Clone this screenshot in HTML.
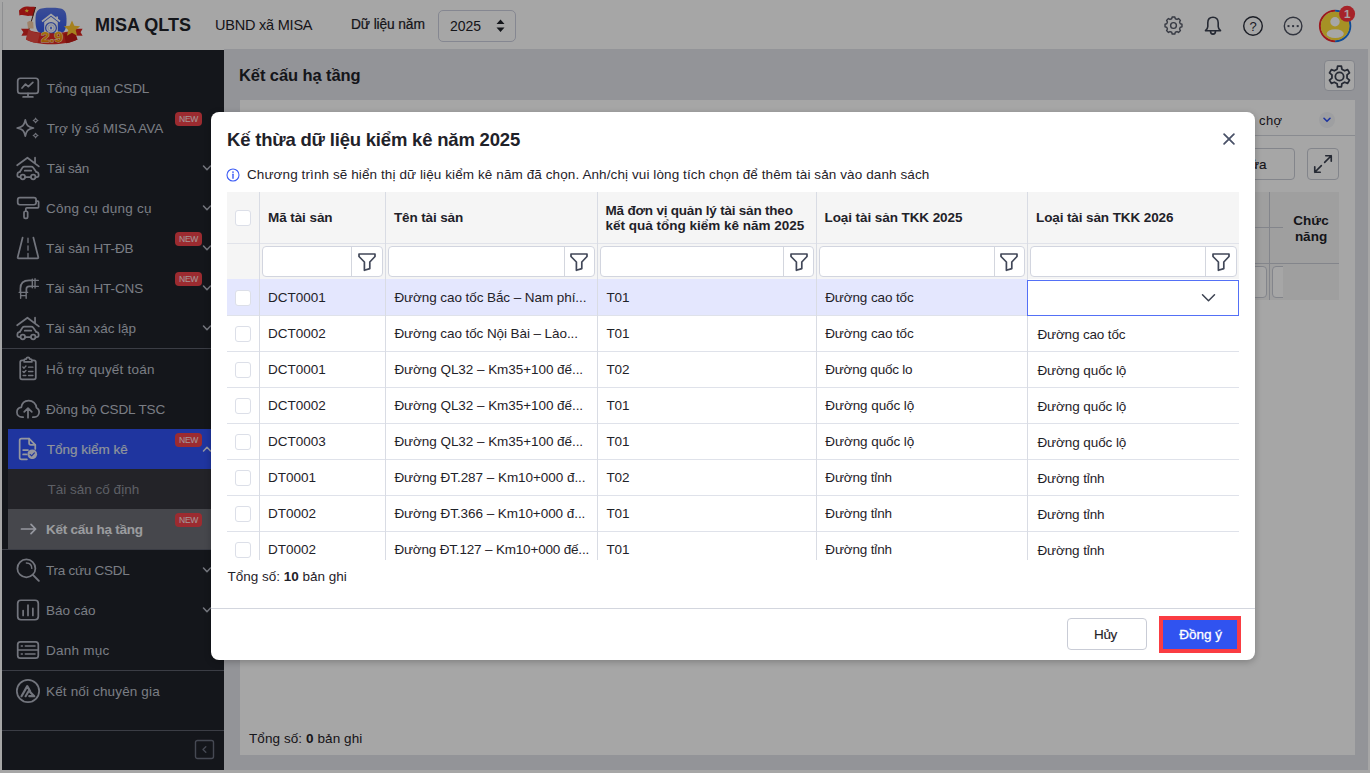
<!DOCTYPE html>
<html lang="vi">
<head>
<meta charset="utf-8">
<title>MISA QLTS</title>
<style>
*{box-sizing:border-box;margin:0;padding:0}
html,body{width:1370px;height:773px;overflow:hidden;background:#fff;font-family:"Liberation Sans",sans-serif;font-size:13px;color:#1f2229}
.abs{position:absolute}
#app{position:absolute;left:0;top:0;width:1370px;height:773px;background:#fff}
/* header */
#hdr{position:absolute;left:2px;top:0;width:1366px;height:50px;background:#fff}
#side{position:absolute;left:2px;top:50px;width:222px;height:720px;background:#20222a}
#main{position:absolute;left:224px;top:50px;width:1144px;height:720px;background:#e2e4ea}
#panel{position:absolute;left:16px;top:50px;width:1115px;height:655px;background:#fff}
#overlay{position:absolute;left:0;top:0;width:1370px;height:773px;background:rgba(0,0,0,.35)}
#modal{position:absolute;left:211px;top:112px;width:1044px;height:548px;background:#fff;border-radius:8px;overflow:hidden;box-shadow:0 2px 7px rgba(0,0,0,.24)}
.t{position:absolute;white-space:nowrap;line-height:1}
/* sidebar */
.mi{position:absolute;left:0;width:222px;height:40px;color:#bcc0cb;font-size:13.500px}
.mi .lb{position:absolute;left:44px;top:13.570px;white-space:nowrap;line-height:1}
.mi svg.ic{position:absolute;left:13px;top:7px;width:26px;height:26px;fill:none;stroke:#b0b4c0;stroke-width:1.6;stroke-linecap:round;stroke-linejoin:round}
.mi svg.cv{position:absolute;left:200px;top:16px;width:10px;height:8px;fill:none;stroke:#b4b8c4;stroke-width:1.5;stroke-linecap:round;stroke-linejoin:round}
.new{position:absolute;left:173px;top:4px;width:27px;height:14px;border-radius:4px;background:#f0434a;color:#ffe9ea;font-size:8.500px;line-height:14.500px;text-align:center;letter-spacing:-.35px}
.sep{position:absolute;left:0;width:222px;height:1px;background:#5b5e6b}

.cb{width:16px;height:16px;border:1px solid #dcdfe8;border-radius:3px;background:#fff}
.hd{font-size:13.500px;font-weight:700;color:#1f2229}
.td{font-size:13.500px;color:#1f2229}
.fi{border:1px solid #d2d5df;border-radius:4px;background:#fff}
/*TUNE*/
#h-yr{letter-spacing:0.000px;margin-left:0.00px}
#m1{letter-spacing:-0.131px;margin-left:0.70px}
#m2{letter-spacing:0.000px;margin-left:0.70px}
#m3{letter-spacing:-0.267px;margin-left:0.70px}
#m4{letter-spacing:0.243px;margin-left:0.00px}
#m5{letter-spacing:-0.075px;margin-left:0.00px}
#m6{letter-spacing:-0.077px;margin-left:0.00px}
#m7{letter-spacing:-0.057px;margin-left:0.00px}
#m8{letter-spacing:0.225px;margin-left:0.00px}
#m9{letter-spacing:-0.107px;margin-left:0.00px}
#m10{letter-spacing:0.000px;margin-left:0.70px}
#m11{letter-spacing:0.000px;margin-left:1.60px}
#m12{letter-spacing:-0.257px;margin-left:0.00px}
#m13{letter-spacing:-0.255px;margin-left:0.00px}
#m14{letter-spacing:0.000px;margin-left:0.00px}
#m15{letter-spacing:0.229px;margin-left:0.00px}
#m16{letter-spacing:0.153px;margin-left:0.00px}
#d-info{letter-spacing:0.098px;margin-left:0.00px}
#h1{letter-spacing:-0.078px;margin-left:0.00px}
#h2{letter-spacing:-0.130px;margin-left:0.00px}
#h3a{letter-spacing:-0.207px;margin-left:0.00px}
#h3b{letter-spacing:0.000px;margin-left:0.00px}
#h4{letter-spacing:-0.080px;margin-left:0.00px}
#h5{letter-spacing:-0.105px;margin-left:0.00px}
#r0c0{letter-spacing:0.000px;margin-left:0.00px}
#r1c0{letter-spacing:0.000px;margin-left:0.00px}
#r2c0{letter-spacing:0.000px;margin-left:0.00px}
#r3c0{letter-spacing:0.000px;margin-left:0.00px}
#r4c0{letter-spacing:0.000px;margin-left:0.00px}
#r0c1{letter-spacing:-0.076px;margin-left:0.40px}
#r1c1{letter-spacing:-0.083px;margin-left:0.40px}
#r2c1{letter-spacing:-0.054px;margin-left:0.40px}
#r3c1{letter-spacing:-0.054px;margin-left:0.40px}
#r4c1{letter-spacing:-0.054px;margin-left:0.40px}
#r0c2{letter-spacing:-0.100px;margin-left:0.90px}
#r1c2{letter-spacing:-0.100px;margin-left:0.90px}
#r2c2{letter-spacing:-0.100px;margin-left:0.90px}
#r3c2{letter-spacing:-0.100px;margin-left:0.90px}
#r4c2{letter-spacing:-0.100px;margin-left:0.90px}
#r5c2{letter-spacing:-0.100px;margin-left:0.90px}
#r6c2{letter-spacing:-0.100px;margin-left:0.90px}
#r7c2{letter-spacing:-0.100px;margin-left:0.90px}
#r0c3{letter-spacing:-0.117px;margin-left:0.70px}
#r1c3{letter-spacing:-0.117px;margin-left:0.70px}
#r2c3{letter-spacing:-0.208px;margin-left:0.70px}
#r3c3{letter-spacing:-0.083px;margin-left:0.80px}
#r4c3{letter-spacing:-0.083px;margin-left:0.80px}
#r5c3{letter-spacing:-0.156px;margin-left:0.80px}
#r6c3{letter-spacing:-0.156px;margin-left:0.80px}
#r7c3{letter-spacing:-0.156px;margin-left:0.80px}
#r1c4{letter-spacing:-0.150px;margin-left:1.40px}
#r2c4{letter-spacing:-0.083px;margin-left:1.40px}
#r3c4{letter-spacing:-0.083px;margin-left:1.40px}
#r4c4{letter-spacing:-0.083px;margin-left:1.40px}
#r5c4{letter-spacing:-0.111px;margin-left:1.40px}
#r6c4{letter-spacing:-0.111px;margin-left:1.40px}
#r7c4{letter-spacing:-0.111px;margin-left:1.40px}
#r5c0{letter-spacing:0.000px;margin-left:0.00px}
#r6c0{letter-spacing:0.000px;margin-left:0.00px}
#r7c0{letter-spacing:0.000px;margin-left:0.00px}
#d-title{letter-spacing:-0.197px;margin-left:0.00px}
#p-title{letter-spacing:-0.093px;margin-left:0.00px}
#p-cho{letter-spacing:0.400px;margin-left:0.00px}
#p-total{letter-spacing:0.082px;margin-left:0.00px}
#d-total{letter-spacing:0.000px;margin-left:0.00px}
#b-huy{letter-spacing:-0.350px;margin-left:0.00px}
#b-ok{letter-spacing:0.000px;margin-left:0.80px}
#r5c1{letter-spacing:-0.044px;margin-left:0.40px}
#r6c1{letter-spacing:-0.052px;margin-left:0.40px}
#r7c1{letter-spacing:-0.179px;margin-left:0.40px}
#h-brand{letter-spacing:0.000px;margin-left:0.00px}
#h-org{letter-spacing:-0.218px;margin-left:0.00px}
#h-dl{letter-spacing:-0.130px;margin-left:0.00px}
/*ENDTUNE*/
</style>
</head>
<body>
<div id="app">
  <div id="hdr">
<svg class="abs" style="left:14px;top:3px" width="68" height="44" viewBox="0 0 68 44">
  <defs>
    <linearGradient id="lgb" x1="0" y1="0" x2="0" y2="1"><stop offset="0" stop-color="#5b78e8"/><stop offset="1" stop-color="#2f55e8"/></linearGradient>
    <linearGradient id="lgo" x1="0" y1="0" x2="0" y2="1"><stop offset="0" stop-color="#ffc21a"/><stop offset="1" stop-color="#f07800"/></linearGradient>
  </defs>
  <path d="M19.5 17 C19.5 6.5 22 4.8 35 4.8 C48 4.8 50.5 6.5 50.5 17 C50.5 29 48 31.5 35 31.5 C22 31.5 19.5 29 19.5 17Z" fill="url(#lgb)"/>
  <path d="M26 18.5 L35 11.5 L44 18.5" fill="none" stroke="#fff" stroke-width="1.6" stroke-linejoin="miter"/>
  <path d="M28.2 19 L35 13.8 L41.8 19 V30 H28.2Z" fill="#fff"/>
  <rect x="40.2" y="13.5" width="1.8" height="3.5" fill="#fff"/>
  <circle cx="35" cy="25" r="5.4" fill="#fff" stroke="#4a69e2" stroke-width="1.3"/>
  <circle cx="35" cy="25" r="3.2" fill="none" stroke="#c9d2f5" stroke-width="1"/>
  <path d="M35 23.2 L36 25 L35 26.8 L34 25Z" fill="#2f55e8"/>
  <path d="M3 7.5 C6 4.5 8.5 3 12 3.5 C15 4 17 3.6 19.6 4 L17.2 13 C14 12.4 12.5 13.6 9.5 12.6 C7 11.8 5.4 12 3.4 12.4Z" fill="#e0201c"/>
  <path d="M10.8 5.4 l.6 1.5 1.6.1 -1.2 1 .4 1.6 -1.4-.9 -1.4.9 .4-1.6 -1.2-1 1.6-.1z" fill="#ffd23a"/>
  <path d="M19.6 4 L12.6 27.5" stroke="#5a2a1a" stroke-width="1" fill="none"/>
  <path d="M11.2 19.5 c1.5-2 4.5-2 6 0 l.4 6 h-5.6z" fill="#f3c9a3"/>
  <path d="M5 25.8 L13.2 25.8 L13.8 32.5 L5.4 32.8 L7.4 29.2Z" fill="#d92722"/>
  <path d="M54.5 25.8 L66.6 25.8 L64.6 29.2 L66.6 32.8 L55 32.5Z" fill="#d92722"/>
  <path d="M12.5 26.5 C20 31.5 50 31.5 57.5 26.5 L61.5 36.5 C50 42.8 20 42.8 10 36.5Z" fill="#e02a24"/>
  <path d="M12.5 26.5 C16 29 20 30 24 30.4 L21.5 40 C17 39.4 13 38.2 10 36.5Z" fill="#ea4a42"/>
  <path d="M57.5 26.500 L61.5 36.5 C58 38.4 54 39.6 50 40.2 L48 31 C52 30 55 28.400 57.5 26.5Z" fill="#c01c18"/>
  <path d="M56 17.5 l2.300 5.300 5.800.5 -4.400 3.800 1.400 5.600 -5.100-3 -5.100 3 1.400-5.600 -4.400-3.800 5.800-.5z" fill="#ffc62e"/>
  <text x="36" y="39" text-anchor="middle" style="font-family:'Liberation Sans',sans-serif" font-weight="700" font-size="15.500" fill="url(#lgo)" stroke="#fff0c8" stroke-width="1" paint-order="stroke" letter-spacing=".2">2.9</text>
</svg>
<div class="t" id="h-brand" style="left:93px;top:16.460px;font-size:18px;font-weight:700;color:#1f2229">MISA QLTS</div>
<div class="t" id="h-org" style="left:213px;top:17.570px;font-size:14.500px;color:#1f2229">UBND xã MISA</div>
<div class="t" id="h-dl" style="left:349px;top:18px;font-size:13.800px;color:#1f2229;-webkit-text-stroke:.22px #1f2229">Dữ liệu năm</div>
<div class="abs" style="left:436px;top:10px;width:78px;height:32px;border:1px solid #cdd0df;border-radius:5px"></div>
<div class="t" id="h-yr" style="left:448px;top:19.350px;font-size:14px;color:#1f2229">2025</div>
<svg class="abs" style="left:493px;top:19px" width="11" height="14" viewBox="0 0 11 14"><path d="M5.500 .5 L9.500 5 H1.500Z M5.500 13 L9.500 8.500 H1.500Z" fill="#1f2229"/></svg>
<!-- right icons -->
<svg class="abs" style="left:1160.500px;top:15px" width="21" height="21" viewBox="0 0 24 24" fill="none" stroke="#555a68" stroke-width="1.600" stroke-linejoin="round"><path d="M9.95 4.27 L10.47 2.32 L13.53 2.32 L14.05 4.27 L16.02 5.08 L17.76 4.07 L19.93 6.24 L18.92 7.98 L19.73 9.95 L21.68 10.47 L21.68 13.53 L19.73 14.05 L18.92 16.02 L19.93 17.76 L17.76 19.93 L16.02 18.92 L14.05 19.73 L13.53 21.68 L10.47 21.68 L9.95 19.73 L7.98 18.92 L6.24 19.93 L4.07 17.76 L5.08 16.02 L4.27 14.05 L2.32 13.53 L2.32 10.47 L4.27 9.95 L5.08 7.98 L4.07 6.24 L6.24 4.07 L7.98 5.08Z"/><circle cx="12" cy="12" r="3.300"/></svg>
<svg class="abs" style="left:1200px;top:14px" width="22" height="24" viewBox="0 0 22 24" fill="none" stroke="#3b4150" stroke-width="1.600" stroke-linecap="round" stroke-linejoin="round"><path d="M11 3.200 c-3.400 0-5.200 2.500-5.200 5.600 v3.600 c0 1.500-.7 2.800-2.300 4.300 h15 c-1.600-1.500-2.300-2.800-2.300-4.300 v-3.600 c0-3.100-1.800-5.600-5.200-5.600z"/><path d="M8.500 17 c0 1.900 1 3.100 2.500 3.100 s2.500-1.200 2.500-3.100"/></svg>
<svg class="abs" style="left:1240px;top:15px" width="22" height="22" viewBox="0 0 22 22" fill="none" stroke="#2a2e3a" stroke-width="1.400"><circle cx="11" cy="11" r="9.300"/><text x="11" y="15.800" text-anchor="middle" style="font-family:'Liberation Sans',sans-serif" font-size="13" fill="#2a2e3a" stroke="none">?</text></svg>
<svg class="abs" style="left:1280px;top:14.800px" width="22" height="22" viewBox="0 0 22 22" fill="none" stroke="#4c5160" stroke-width="1.400"><circle cx="11.100" cy="11" r="8.800"/><g fill="#4c5160" stroke="none"><rect x="5.500" y="10.100" width="2" height="2"/><rect x="10.100" y="10.100" width="2" height="2"/><rect x="14.700" y="10.100" width="2" height="2"/></g></svg>
<svg class="abs" style="left:1316px;top:7px;overflow:visible" width="42" height="38" viewBox="0 0 42 38">
  <defs><clipPath id="avc"><circle cx="17.100" cy="19" r="14.200"/></clipPath></defs>
  <path d="M17.100 3.800 A15.200 15.200 0 0 0 17.100 34.200" fill="none" stroke="#f0262e" stroke-width="2"/>
  <path d="M17.100 3.800 A15.200 15.200 0 0 1 17.100 34.200" fill="none" stroke="#1573e6" stroke-width="2"/>
  <circle cx="17.100" cy="19" r="14.300" fill="#ffdf3a"/>
  <g clip-path="url(#avc)" fill="#fff"><circle cx="17" cy="14.700" r="4.700"/><ellipse cx="17.200" cy="26.700" rx="8.600" ry="4.400"/></g>
  <circle cx="29.100" cy="6.800" r="8" fill="#ff363f"/>
  <text x="29.100" y="10.800" text-anchor="middle" style="font-family:'Liberation Sans',sans-serif" font-size="11.500" font-weight="700" fill="#fff">1</text>
</svg>
</div>
  <div class="abs" style="left:224px;top:49px;width:1144px;height:1px;background:#e2e4ea"></div>
  <div class="abs" style="left:2px;top:2px;width:1px;height:48px;background:#d9dade"></div>
  <div id="side"><div class="mi" style="top:18px;"><svg class="ic" viewBox="0 0 24 24" style=""><rect x="2.500" y="3" width="19" height="14" rx="2.500"/><path d="M12 17 v3 M7.500 20.200 h9"/><path d="M6.500 12 l3.200-3.600 2.600 2.400 4.200-4"/></svg><span class="lb" id="m1" style="">Tổng quan CSDL</span></div>
<div class="mi" style="top:58px;"><svg class="ic" viewBox="0 0 24 24" style=""><path d="M9.500 4.500 C10.500 9.500 12 11 17 12 C12 13 10.500 14.500 9.500 19.500 C8.500 14.500 7 13 2 12 C7 11 8.500 9.500 9.500 4.500Z"/><path d="M19 2.800 C19.300 4.300 19.700 4.700 21.200 5 C19.700 5.300 19.300 5.700 19 7.200 C18.700 5.700 18.300 5.300 16.800 5 C18.300 4.700 18.700 4.300 19 2.800Z M19 16.800 C19.300 18.300 19.700 18.700 21.200 19 C19.700 19.300 19.300 19.700 19 21.200 C18.700 19.700 18.300 19.300 16.800 19 C18.300 18.700 18.700 18.300 19 16.800Z" stroke-width="1"/></svg><span class="lb" id="m2" style="">Trợ lý số MISA AVA</span><div class="new">NEW</div></div>
<div class="mi" style="top:98px;"><svg class="ic" viewBox="0 0 24 24" style=""><path d="M2 9.500 L11.500 2.500 L22 10.500 M18.500 2.500 v5.300"/><path d="M4.500 15.500 L6.800 11.800 C7.300 11.100 7.800 10.800 8.600 10.800 H15 C15.800 10.800 16.400 11.100 16.900 11.800 L19.500 15.500"/><path d="M9 14.500 h6"/><path d="M4.500 15.500 C3 15.700 2.200 16.500 2.200 18 V19 C2.200 20 2.800 20.500 3.800 20.500 H5 M9.500 20.500 H14.500 M19 20.500 H20.200 C21.200 20.500 21.800 20 21.800 19 V18 C21.800 16.500 21 15.700 19.500 15.500"/><circle cx="7.200" cy="20.300" r="2.100"/><circle cx="16.800" cy="20.300" r="2.100"/></svg><span class="lb" id="m3" style="">Tài sản</span><svg class="cv" viewBox="0 0 10 8"><path d="M1.500 2 L5 5.800 L8.500 2"/></svg></div>
<div class="mi" style="top:138px;"><svg class="ic" viewBox="0 0 24 24" style=""><rect x="2.500" y="2.500" width="17" height="6.500" rx="2"/><path d="M19.500 5.700 H21 C21.600 5.700 21.800 6 21.800 6.500 V11 C21.800 11.600 21.500 11.800 21 11.800 H11 C10.300 11.800 10 12.100 10 12.800 V15"/><rect x="8.300" y="15" width="3.400" height="6.500" rx="1.200"/></svg><span class="lb" id="m4" style="">Công cụ dụng cụ</span><svg class="cv" viewBox="0 0 10 8"><path d="M1.500 2 L5 5.800 L8.500 2"/></svg></div>
<div class="mi" style="top:178px;"><svg class="ic" viewBox="0 0 24 24" style=""><path d="M7 2.500 L2.500 20.500 C2.300 21.200 2.600 21.500 3.300 21.500 H20.700 C21.400 21.500 21.700 21.200 21.500 20.500 L17 2.500"/><path d="M12 3 v4 M12 10 v4 M12 17 v4" stroke-width="1.200"/></svg><span class="lb" id="m5" style="">Tài sản HT-ĐB</span><div class="new">NEW</div><svg class="cv" viewBox="0 0 10 8"><path d="M1.500 2 L5 5.800 L8.500 2"/></svg></div>
<div class="mi" style="top:218px;"><svg class="ic" viewBox="0 0 24 24" style=""><path d="M5 16 V12.500 C5 7.500 8 5 13 5 H16 M10.500 16 V13 C10.500 11.300 11.300 10.500 13 10.500 H16"/><path d="M16 3.800 V11.700 M3.800 16 H11.700 M5.200 16 V19 H10.300 V16 M5.200 19 V21.500 M10.300 19 V21.500 M16 5 H18.500 V10.500 H16 M18.500 5 H21.500 M18.500 10.500 H21.500 M18.500 3.500 V12" stroke-width="1.300"/></svg><span class="lb" id="m6" style="">Tài sản HT-CNS</span><div class="new">NEW</div><svg class="cv" viewBox="0 0 10 8"><path d="M1.500 2 L5 5.800 L8.500 2"/></svg></div>
<div class="mi" style="top:258px;"><svg class="ic" viewBox="0 0 24 24" style=""><path d="M2 9.500 L11.500 2.500 L22 10.500 M18.500 2.500 v5.300"/><path d="M4.500 15.500 L6.800 11.800 C7.300 11.100 7.800 10.800 8.600 10.800 H15 C15.800 10.800 16.400 11.100 16.900 11.800 L19.500 15.500"/><path d="M9 14.500 h6"/><path d="M4.500 15.500 C3 15.700 2.200 16.500 2.200 18 V19 C2.200 20 2.800 20.500 3.800 20.500 H5 M9.500 20.500 H14.500 M19 20.500 H20.200 C21.200 20.500 21.800 20 21.800 19 V18 C21.800 16.500 21 15.700 19.500 15.500"/><circle cx="7.200" cy="20.300" r="2.100"/><circle cx="16.800" cy="20.300" r="2.100"/></svg><span class="lb" id="m7" style="">Tài sản xác lập</span><svg class="cv" viewBox="0 0 10 8"><path d="M1.500 2 L5 5.800 L8.500 2"/></svg></div>
<div class="sep" style="top:298px"></div>
<div class="mi" style="top:299px;"><svg class="ic" viewBox="0 0 24 24" style=""><path d="M8.500 4 H6.500 C5.400 4 4.800 4.600 4.800 5.700 V19.800 C4.800 20.900 5.400 21.500 6.500 21.500 H17.500 C18.600 21.500 19.200 20.900 19.200 19.800 V5.700 C19.200 4.600 18.600 4 17.500 4 H15.500"/><path d="M8.500 5.500 V3.800 C8.500 3.200 8.800 2.800 9.500 2.800 H10.300 C10.500 1.800 11.100 1.300 12 1.300 C12.900 1.300 13.500 1.800 13.700 2.800 H14.500 C15.200 2.800 15.500 3.200 15.500 3.800 V5.500Z"/><path d="M7.300 10.200 l1 1 1.800-1.900 M12.500 10.300 H16.500 M7.300 14.200 l1 1 1.800-1.900 M12.500 14.300 H16.500 M7.500 18 H10 M12.500 18 H16.500" stroke-width="1.300"/></svg><span class="lb" id="m8" style="">Hỗ trợ quyết toán</span></div>
<div class="mi" style="top:339px;"><svg class="ic" viewBox="0 0 24 24" style=""><path d="M7.500 19.500 H6.500 C3.800 19.500 1.800 17.600 1.800 15 C1.800 12.600 3.500 10.800 5.800 10.600 C6.300 6.800 9 4.300 12.600 4.300 C16.500 4.300 19.500 7 19.800 10.800 C21.300 11.500 22.300 13 22.300 14.800 C22.300 17.500 20.300 19.500 17.800 19.500 H16.500"/><path d="M12 20 V11.500 M8.500 14.700 L12 11.200 L15.500 14.700"/></svg><span class="lb" id="m9" style="">Đồng bộ CSDL TSC</span></div>
<div class="abs" style="left:6px;top:379px;width:203px;height:40px;background:#3052f5"></div>
<div class="abs" style="left:6px;top:419px;width:203px;height:40px;background:#36373e"></div>
<div class="abs" style="left:6px;top:459px;width:203px;height:40px;background:#6c6e76"></div>
<div class="mi" style="top:379px;"><svg class="ic" viewBox="0 0 24 24" style="stroke:#e6e9f5"><path d="M11 21.500 H6 C4.900 21.500 4.300 20.900 4.300 19.800 V4.200 C4.300 3.100 4.900 2.500 6 2.500 H13 L18.700 8.200 V12"/><path d="M13 2.500 V6.500 C13 7.600 13.600 8.200 14.700 8.200 H18.700"/><path d="M7.500 13 H12 M7.500 17 H10.500" /></svg><svg class="abs" style="left:25px;top:19.500px" width="10.500" height="10.500" viewBox="0 0 13 13"><circle cx="6.500" cy="6.500" r="6" fill="#e6e9f5"/><path d="M3.800 6.700 l1.900 1.900 3.500-3.800" fill="none" stroke="#3052f5" stroke-width="1.400" stroke-linecap="round" stroke-linejoin="round"/></svg><span class="lb" id="m10" style="color:#eef0f8;-webkit-text-stroke:.15px #dfe2ee;color:#dfe2ee">Tổng kiểm kê</span><div class="new">NEW</div><svg class="cv" viewBox="0 0 10 8" style="stroke:#e6e9f5"><path d="M1.500 6 L5 2.200 L8.500 6"/></svg></div>
<div class="mi" style="top:419px;"><span class="lb" id="m11" style="color:#8f929c">Tài sản cố định</span></div>
<div class="mi" style="top:459px;"><svg class="ic" viewBox="0 0 24 24" style="stroke:#e6e9f5;left:13px"><path d="M6 12 H19 M14.800 7.800 L19 12 L14.800 16.200"/></svg><span class="lb" id="m12" style="color:#eef0f4;font-weight:700">Kết cấu hạ tầng</span><div class="new">NEW</div></div>
<div class="sep" style="top:499px"></div>
<div class="mi" style="top:500px;"><svg class="ic" viewBox="0 0 24 24" style=""><circle cx="10.500" cy="10.500" r="8.300"/><path d="M16.500 16.500 L22 22" stroke-width="1.800"/><path d="M10.500 5.500 C13.500 5.500 15.500 7.500 15.500 10.500" stroke-width="1.300"/></svg><span class="lb" id="m13" style="">Tra cứu CSDL</span><svg class="cv" viewBox="0 0 10 8"><path d="M1.500 2 L5 5.800 L8.500 2"/></svg></div>
<div class="mi" style="top:540px;"><svg class="ic" viewBox="0 0 24 24" style=""><rect x="2.500" y="3" width="19" height="18" rx="3"/><path d="M7.500 17 V12.500 M12 17 V7.500 M16.500 17 V10.500"/></svg><span class="lb" id="m14" style="">Báo cáo</span><svg class="cv" viewBox="0 0 10 8"><path d="M1.500 2 L5 5.800 L8.500 2"/></svg></div>
<div class="mi" style="top:580px;"><svg class="ic" viewBox="0 0 24 24" style=""><rect x="2.500" y="4.500" width="19" height="15" rx="2.500"/><path d="M2.500 12 H21.500 M5.800 8.300 H6.800 M9.500 8.300 H18.500 M5.800 15.700 H6.800 M9.500 15.700 H18.500" stroke-width="1.400"/></svg><span class="lb" id="m15" style="">Danh mục</span></div>
<div class="sep" style="top:620px"></div>
<div class="mi" style="top:621px;"><svg class="ic" viewBox="0 0 24 24" style=""><circle cx="12" cy="12" r="10.300"/><path d="M6 16.800 L11.300 7.500 L14 12.200 M9.800 16.800 L12.800 11.800 L17.800 16.800 H13.200" stroke-width="2"/></svg><span class="lb" id="m16" style="">Kết nối chuyên gia</span></div>
<div class="sep" style="top:680px"></div>
<svg class="abs" style="left:192px;top:689px" width="21" height="21" viewBox="0 0 21 21" fill="none" stroke="#6b7080" stroke-width="1.400" stroke-linecap="round" stroke-linejoin="round"><rect x="1.500" y="1.500" width="18" height="18" rx="2"/><path d="M11.800 7.800 L9 10.500 L11.800 13.200"/></svg></div>
  <div id="main">
<div class="t" id="p-title" style="left:15px;top:16.730px;font-size:16.500px;font-weight:700;color:#1f2229">Kết cấu hạ tầng</div>
<div class="abs" style="left:1100px;top:10px;width:31px;height:31px;background:#fff;border:1px solid #c9ccd6;border-radius:4px"></div>
<svg class="abs" style="left:1103.0px;top:13.5px" width="25" height="25" viewBox="0 0 24 24" fill="none" stroke="#3b4150" stroke-width="1.700" stroke-linejoin="round"><path d="M9.71 4.96 L10.19 1.96 L13.81 1.96 L14.29 4.96 L16.95 6.50 L19.79 5.42 L21.60 8.54 L19.24 10.46 L19.24 13.54 L21.60 15.46 L19.79 18.58 L16.95 17.50 L14.29 19.04 L13.81 22.04 L10.19 22.04 L9.71 19.04 L7.05 17.50 L4.21 18.58 L2.40 15.46 L4.76 13.54 L4.76 10.46 L2.40 8.54 L4.21 5.42 L7.05 6.50Z"/><circle cx="12" cy="12" r="4"/></svg>
<div id="panel">
  <div class="abs" style="left:0;top:35px;width:1115px;height:1px;background:#d3d6de"></div>
  <div class="t" id="p-cho" style="left:1019px;top:14px;font-size:13px;color:#1f2229">chợ</div>
  <div class="abs" style="left:1079px;top:12px;width:16px;height:16px;border-radius:8px;background:#f3f4f8"></div>
  <svg class="abs" style="left:1082px;top:16px" width="10" height="8" viewBox="0 0 10 8" fill="none" stroke="#3052f5" stroke-width="1.600" stroke-linecap="round" stroke-linejoin="round"><path d="M2 2.300 L5 5.300 L8 2.300"/></svg>
  <div class="abs" style="left:975px;top:48px;width:80px;height:32px;border:1px solid #c9ccd6;border-radius:4px;background:#fff"></div>
  <div class="t" id="p-sua" style="left:1001px;top:58px;font-size:13.500px;color:#1f2229;-webkit-text-stroke:.15px #1f2229">Sửa</div>
  <div class="abs" style="left:1067px;top:48px;width:32px;height:32px;border:1px solid #c9ccd6;border-radius:4px;background:#fff"></div>
  <svg class="abs" style="left:1072px;top:53px" width="22" height="22" viewBox="0 0 20 20" fill="none" stroke="#3b4150" stroke-width="1.500" stroke-linecap="round" stroke-linejoin="round"><path d="M11.500 8.500 L17.500 2.500 M12.500 2.500 H17.500 V7.500 M8.500 11.500 L2.500 17.500 M2.500 12.500 V17.500 H7.500"/></svg>
  <!-- table behind -->
  <div class="abs" style="left:16px;top:92px;width:1083px;height:108px;background:#f5f5f5"></div>
  <div class="abs" style="left:1029px;top:92px;width:1px;height:108px;background:#c9ccd6"></div>
  <div class="abs" style="left:16px;top:127px;width:1027px;height:1px;background:#c9ccd6"></div>
  <div class="abs" style="left:16px;top:163px;width:1083px;height:1px;background:#c9ccd6"></div>
  <div class="abs" style="left:927px;top:166px;width:100px;height:32px;border:1px solid #c9ccd6;border-radius:4px;background:#fff"></div>
  <div class="abs" style="left:1032px;top:166px;width:60px;height:32px;border:1px solid #c9ccd6;border-radius:4px;background:#fff"></div>
  <div class="abs" style="left:1043px;top:92px;width:56px;height:71px;background:#f5f5f5"></div>
  <div class="abs" style="left:1043px;top:164px;width:56px;height:36px;background:#f5f5f5"></div>
  <div class="abs" id="p-cn" style="left:1043px;top:112.800px;width:56px;text-align:center;font-size:13.500px;font-weight:700;line-height:16.300px;color:#1f2229">Chức<br>năng</div>
  <div class="t" id="p-total" style="left:9px;top:631.67px;font-size:13.500px;color:#1f2229">Tổng số: <b>0</b> bản ghi</div>
</div>
</div>
  <div id="overlay"></div>
  <div id="modal"><div class="t" id="d-title" style="left:16px;top:19.24px;font-size:18.500px;font-weight:700;color:#1f2229">Kế thừa dữ liệu kiểm kê năm 2025</div>
<svg class="abs" style="left:1011px;top:20px" width="14" height="14" viewBox="0 0 14 14" fill="none" stroke="#4a5268" stroke-width="1.800" stroke-linecap="round"><path d="M2.100 2.100 L11.900 11.900 M11.900 2.100 L2.100 11.900"/></svg>
<svg class="abs" style="left:15px;top:55.5px" width="14" height="14" viewBox="0 0 14 14" fill="none" stroke="#3d5cf5" stroke-width="1.100"><circle cx="7" cy="7" r="6"/><path d="M7 6.300 V10.200" stroke-width="1.400" stroke-linecap="round"/><circle cx="7" cy="4.100" r=".85" fill="#3d5cf5" stroke="none"/></svg>
<div class="t" id="d-info" style="left:36px;top:55.87px;font-size:13.500px;color:#1f2229">Chương trình sẽ hiển thị dữ liệu kiểm kê năm đã chọn. Anh/chị vui lòng tích chọn để thêm tài sản vào danh sách</div>
<div class="abs" id="tbl" style="left:16px;top:80px;width:1012px;height:368px;overflow:hidden">
<div class="abs" style="left:0;top:0;width:1012px;height:87px;background:#f5f5f5"></div>
<div class="abs" style="left:0;top:51px;width:1012px;height:1px;background:#e1e3ea"></div>
<div class="abs" style="left:0;top:87px;width:800px;height:36px;background:#e4e7fe"></div>
<div class="abs" style="left:0;top:122.5px;width:1012px;height:1px;background:#dfe2ea"></div>
<div class="abs" style="left:0;top:158.5px;width:1012px;height:1px;background:#dfe2ea"></div>
<div class="abs" style="left:0;top:194.5px;width:1012px;height:1px;background:#dfe2ea"></div>
<div class="abs" style="left:0;top:230.5px;width:1012px;height:1px;background:#dfe2ea"></div>
<div class="abs" style="left:0;top:266.5px;width:1012px;height:1px;background:#dfe2ea"></div>
<div class="abs" style="left:0;top:302.5px;width:1012px;height:1px;background:#dfe2ea"></div>
<div class="abs" style="left:0;top:338.5px;width:1012px;height:1px;background:#dfe2ea"></div>
<div class="abs" style="left:0;top:374.5px;width:1012px;height:1px;background:#dfe2ea"></div>
<div class="abs" style="left:32px;top:0;width:1px;height:400px;background:#d9dce4"></div>
<div class="abs" style="left:158px;top:0;width:1px;height:400px;background:#d9dce4"></div>
<div class="abs" style="left:370px;top:0;width:1px;height:400px;background:#d9dce4"></div>
<div class="abs" style="left:589px;top:0;width:1px;height:400px;background:#d9dce4"></div>
<div class="abs" style="left:800px;top:0;width:1px;height:400px;background:#d9dce4"></div>
<div class="abs cb" style="left:8px;top:17.500px"></div>
<div class="t hd" id="h1" style="left:41px;top:18.70px">Mã tài sản</div>
<div class="t hd" id="h2" style="left:167px;top:18.70px">Tên tài sản</div>
<div class="t hd" id="h4" style="left:597.5px;top:18.70px">Loại tài sản TKK 2025</div>
<div class="t hd" id="h5" style="left:809px;top:18.70px">Loại tài sản TKK 2026</div>
<div class="t hd" id="h3a" style="left:378.5px;top:11.770px">Mã đơn vị quản lý tài sản theo</div>
<div class="t hd" id="h3b" style="left:378.5px;top:27.270px">kết quả tổng kiểm kê năm 2025</div>
<div class="abs fi" style="left:35px;top:54px;width:121px;height:31px"></div>
<div class="abs" style="left:124px;top:55px;width:1px;height:29px;background:#d3d6de"></div>
<svg class="abs" style="left:130.20px;top:59.80px" width="20" height="21" viewBox="-10 -2 20 21" fill="none" stroke="#414758" stroke-width="1.700" stroke-linejoin="round"><path d="M-8 0 H8 V2.500 L2.800 8 V14.600 L-2.600 16.300 V8 L-8 2.500Z"/></svg>
<div class="abs fi" style="left:161px;top:54px;width:207px;height:31px"></div>
<div class="abs" style="left:336.5px;top:55px;width:1px;height:29px;background:#d3d6de"></div>
<svg class="abs" style="left:342.25px;top:59.80px" width="20" height="21" viewBox="-10 -2 20 21" fill="none" stroke="#414758" stroke-width="1.700" stroke-linejoin="round"><path d="M-8 0 H8 V2.500 L2.800 8 V14.600 L-2.600 16.300 V8 L-8 2.500Z"/></svg>
<div class="abs fi" style="left:373px;top:54px;width:214px;height:31px"></div>
<div class="abs" style="left:556px;top:55px;width:1px;height:29px;background:#d3d6de"></div>
<svg class="abs" style="left:561.50px;top:59.80px" width="20" height="21" viewBox="-10 -2 20 21" fill="none" stroke="#414758" stroke-width="1.700" stroke-linejoin="round"><path d="M-8 0 H8 V2.500 L2.800 8 V14.600 L-2.600 16.300 V8 L-8 2.500Z"/></svg>
<div class="abs fi" style="left:592px;top:54px;width:206px;height:31px"></div>
<div class="abs" style="left:766.5px;top:55px;width:1px;height:29px;background:#d3d6de"></div>
<svg class="abs" style="left:772.25px;top:59.80px" width="20" height="21" viewBox="-10 -2 20 21" fill="none" stroke="#414758" stroke-width="1.700" stroke-linejoin="round"><path d="M-8 0 H8 V2.500 L2.800 8 V14.600 L-2.600 16.300 V8 L-8 2.500Z"/></svg>
<div class="abs fi" style="left:803px;top:54px;width:207px;height:31px"></div>
<div class="abs" style="left:978px;top:55px;width:1px;height:29px;background:#d3d6de"></div>
<svg class="abs" style="left:984.00px;top:59.80px" width="20" height="21" viewBox="-10 -2 20 21" fill="none" stroke="#414758" stroke-width="1.700" stroke-linejoin="round"><path d="M-8 0 H8 V2.500 L2.800 8 V14.600 L-2.600 16.300 V8 L-8 2.500Z"/></svg>
<div class="abs cb" style="left:8px;top:97.5px"></div>
<div class="t td" id="r0c0" style="left:41px;top:99.20px">DCT0001</div>
<div class="t td" id="r0c1" style="left:167px;top:99.20px">Đường cao tốc Bắc – Nam phí...</div>
<div class="t td" id="r0c2" style="left:378.5px;top:99.20px">T01</div>
<div class="t td" id="r0c3" style="left:597.5px;top:99.20px">Đường cao tốc</div>
<div class="abs cb" style="left:8px;top:133.5px"></div>
<div class="t td" id="r1c0" style="left:41px;top:135.20px">DCT0002</div>
<div class="t td" id="r1c1" style="left:167px;top:135.20px">Đường cao tốc Nội Bài – Lào...</div>
<div class="t td" id="r1c2" style="left:378.5px;top:135.20px">T01</div>
<div class="t td" id="r1c3" style="left:597.5px;top:135.20px">Đường cao tốc</div>
<div class="t td" id="r1c4" style="left:809px;top:135.70px">Đường cao tốc</div>
<div class="abs cb" style="left:8px;top:169.5px"></div>
<div class="t td" id="r2c0" style="left:41px;top:171.20px">DCT0001</div>
<div class="t td" id="r2c1" style="left:167px;top:171.20px">Đường QL32 – Km35+100 đế...</div>
<div class="t td" id="r2c2" style="left:378.5px;top:171.20px">T02</div>
<div class="t td" id="r2c3" style="left:597.5px;top:171.20px">Đường quốc lo</div>
<div class="t td" id="r2c4" style="left:809px;top:171.70px">Đường quốc lộ</div>
<div class="abs cb" style="left:8px;top:205.5px"></div>
<div class="t td" id="r3c0" style="left:41px;top:207.20px">DCT0002</div>
<div class="t td" id="r3c1" style="left:167px;top:207.20px">Đường QL32 – Km35+100 đế...</div>
<div class="t td" id="r3c2" style="left:378.5px;top:207.20px">T01</div>
<div class="t td" id="r3c3" style="left:597.5px;top:207.20px">Đường quốc lộ</div>
<div class="t td" id="r3c4" style="left:809px;top:207.70px">Đường quốc lộ</div>
<div class="abs cb" style="left:8px;top:241.5px"></div>
<div class="t td" id="r4c0" style="left:41px;top:243.20px">DCT0003</div>
<div class="t td" id="r4c1" style="left:167px;top:243.20px">Đường QL32 – Km35+100 đế...</div>
<div class="t td" id="r4c2" style="left:378.5px;top:243.20px">T01</div>
<div class="t td" id="r4c3" style="left:597.5px;top:243.20px">Đường quốc lộ</div>
<div class="t td" id="r4c4" style="left:809px;top:243.70px">Đường quốc lộ</div>
<div class="abs cb" style="left:8px;top:277.5px"></div>
<div class="t td" id="r5c0" style="left:41px;top:279.20px">DT0001</div>
<div class="t td" id="r5c1" style="left:167px;top:279.20px">Đường ĐT.287 – Km10+000 đ...</div>
<div class="t td" id="r5c2" style="left:378.5px;top:279.20px">T02</div>
<div class="t td" id="r5c3" style="left:597.5px;top:279.20px">Đường tỉnh</div>
<div class="t td" id="r5c4" style="left:809px;top:279.70px">Đường tỉnh</div>
<div class="abs cb" style="left:8px;top:313.5px"></div>
<div class="t td" id="r6c0" style="left:41px;top:315.20px">DT0002</div>
<div class="t td" id="r6c1" style="left:167px;top:315.20px">Đường ĐT.366 – Km10+000 đ...</div>
<div class="t td" id="r6c2" style="left:378.5px;top:315.20px">T01</div>
<div class="t td" id="r6c3" style="left:597.5px;top:315.20px">Đường tỉnh</div>
<div class="t td" id="r6c4" style="left:809px;top:315.70px">Đường tỉnh</div>
<div class="abs cb" style="left:8px;top:349.5px"></div>
<div class="t td" id="r7c0" style="left:41px;top:351.20px">DT0002</div>
<div class="t td" id="r7c1" style="left:167px;top:351.20px">Đường ĐT.127 – Km10+000 đế...</div>
<div class="t td" id="r7c2" style="left:378.5px;top:351.20px">T01</div>
<div class="t td" id="r7c3" style="left:597.5px;top:351.20px">Đường tỉnh</div>
<div class="t td" id="r7c4" style="left:809px;top:351.70px">Đường tỉnh</div>
<div class="abs" style="left:800px;top:88px;width:212px;height:36px;background:#fff;border:1px solid #5470f6"></div>
<svg class="abs" style="left:974px;top:101px" width="15" height="10" viewBox="0 0 15 10" fill="none" stroke="#3b4150" stroke-width="1.500" stroke-linecap="round" stroke-linejoin="round"><path d="M1.500 1.800 L7.500 7.800 L13.500 1.800"/></svg>
</div>
<div class="t" id="d-total" style="left:16.5px;top:458.17px;font-size:13.500px;color:#1f2229">Tổng số: <b>10</b> bản ghi</div>
<div class="abs" style="left:0;top:496px;width:1044px;height:1px;background:#d3d6de"></div>
<div class="abs" style="left:856px;top:506px;width:80px;height:32px;border:1px solid #c9ccd6;border-radius:4px;background:#fff"></div>
<div class="t" id="b-huy" style="left:883px;top:516.07px;font-size:13.500px;color:#1f2229;-webkit-text-stroke:.15px #1f2229">Hủy</div>
<div class="abs" style="left:948px;top:504px;width:82px;height:37px;background:#3053f0;border:4px solid #fa3c42"></div>
<div class="t" id="b-ok" style="left:967.5px;top:516.07px;font-size:13.500px;color:#fff;-webkit-text-stroke:.3px #fff">Đồng ý</div></div>
</div>
</body>
</html>
